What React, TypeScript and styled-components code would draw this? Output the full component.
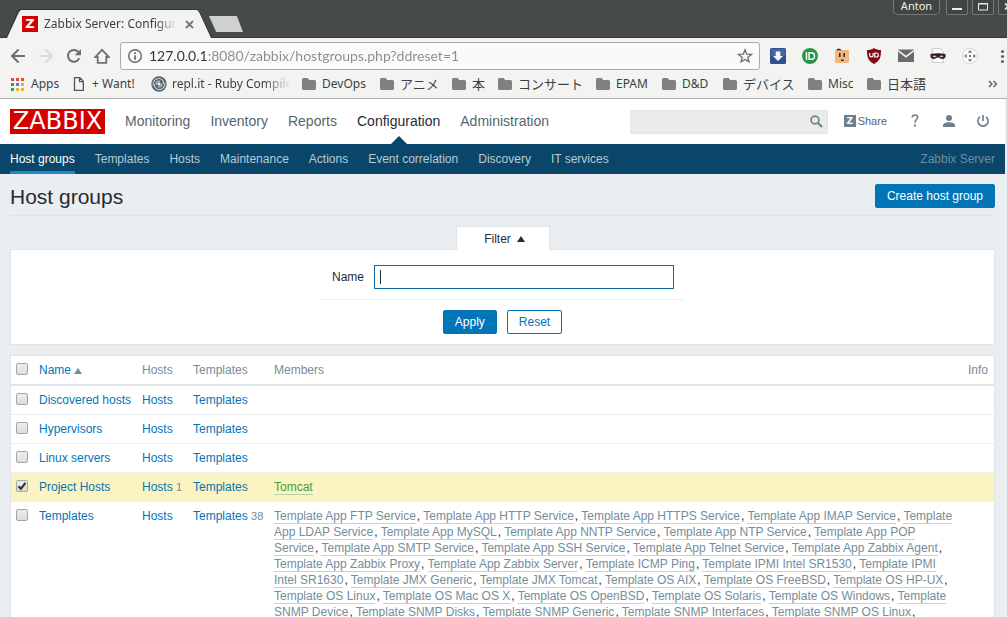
import React, { useState } from "react";
import styled, { createGlobalStyle, css } from "styled-components";

const UI = `"Noto Sans", "Noto Sans CJK JP", sans-serif`;
const BODY = `"Liberation Sans", Arial, sans-serif`;

const GlobalStyle = createGlobalStyle`
  *, *::before, *::after { box-sizing: border-box; }
  body { margin: 0; background: #ebeef0; color: #1f2c33; font: 12px/16px ${BODY}; }
  a { text-decoration: none; }
  button, input { font: inherit; }
  svg { display: block; flex: none; }
`;

const Window = styled.div`
  display: flex;
  flex-direction: column;
  height: 100vh;
  overflow: hidden;
`;

/* ---------- Browser chrome ---------- */

const TitleBar = styled.div`
  display: flex;
  flex: none;
  align-items: flex-end;
  height: 38px;
  padding-left: 6px;
  background: #464a49;
  box-shadow: inset 0 -1px #333736;
  font-family: ${UI};
  overflow: hidden;
`;

const TabEdge = styled.div`
  flex: none;
  width: 206px;
  height: 29px;
  padding: 1px 1px 0;
  background: #2f3332;
  clip-path: polygon(0 100%, 12px 2px, 14px 0, 191px 0, 193px 2px, 100% 100%);
`;

const Tab = styled.div`
  display: flex;
  align-items: center;
  height: 28px;
  padding: 0 17px 0 15px;
  background: #f3f4f2;
  clip-path: polygon(0 100%, 12px 2px, 14px 0, 190px 0, 192px 2px, 100% 100%);
`;

const TabTitle = styled.span`
  flex: 1;
  margin: 0 8px 0 6px;
  overflow: hidden;
  white-space: nowrap;
  font-size: 12px;
  line-height: 20px;
  color: #3c4043;
  mask-image: linear-gradient(to right, #000 84%, transparent);
`;

const IconButton = styled.button`
  display: flex;
  flex: none;
  align-items: center;
  justify-content: center;
  padding: 0;
  border: 0;
  background: none;
`;

const NavButton = styled(IconButton)`
  width: 28px;
  height: 28px;
`;

const NewTab = styled.button`
  width: 34px;
  height: 16px;
  margin: 0 0 6px -3px;
  padding: 0;
  border: 0;
  background: #cfd1cf;
  clip-path: polygon(0 0, 82% 0, 100% 100%, 21% 100%);
`;

const WindowControls = styled.div`
  display: flex;
  align-self: flex-start;
  gap: 4px;
  margin-left: auto;
`;

const WindowButton = styled.button<{ $width: number; $clipped?: boolean }>`
  display: flex;
  align-items: center;
  justify-content: center;
  width: ${(p) => p.$width}px;
  height: 15px;
  padding: 0;
  border: 1px solid #757877;
  border-top: 0;
  border-right-width: ${(p) => (p.$clipped ? 0 : 1)}px;
  border-radius: 0 0 2px 2px;
  background: #414544;
  color: #eceeed;
`;

const ProfileButton = styled(WindowButton)`
  margin-right: 2px;
  padding-bottom: 2px;
  border-radius: 0 0 5px 5px;
  font-size: 11px;
  line-height: 12px;
`;

const Chrome = styled.div`
  flex: none;
  border-bottom: 1px solid #b0b1b0;
  background: #f3f4f2;
  color: #3c3f3e;
  font-family: ${UI};
`;

const Toolbar = styled.div`
  display: flex;
  align-items: center;
  height: 36px;
  padding-left: 4px;
`;

const AddressBar = styled.label`
  display: flex;
  flex: 1;
  align-items: center;
  gap: 6px;
  height: 28px;
  margin: 0 10px 0 4px;
  padding: 0 6px;
  border: 1px solid #a9aaa9;
  border-radius: 3px;
  background: #fafafa;
`;

const AddressInput = styled.input`
  flex: 1;
  min-width: 0;
  padding: 0;
  border: 0;
  outline: 0;
  background: linear-gradient(to right, #333 59px, #8c8c8c 59px);
  background-clip: text;
  -webkit-text-fill-color: transparent;
  color: #8c8c8c;
  font-family: Lato, ${UI};
  font-size: 14px;
  line-height: 20px;
`;

const Extensions = styled.div`
  display: flex;
  gap: 16px;
`;

const Bookmarks = styled.nav`
  display: flex;
  align-items: center;
  height: 20px;
  margin-bottom: 4px;
  padding: 0 9px 0 11px;
`;

const Bookmark = styled.a<{ $width: number; $cjk?: boolean; $fade?: boolean }>`
  display: flex;
  flex: none;
  align-items: center;
  gap: ${(p) => (p.$fade ? 5 : 6)}px;
  width: ${(p) => p.$width}px;
  overflow: hidden;
  white-space: nowrap;
  color: inherit;
  font-size: ${(p) => (p.$cjk ? 13 : 12)}px;
  line-height: 20px;
  ${(p) =>
    p.$fade &&
    css`
      mask-image: linear-gradient(to right, #000 74%, transparent 93%);
    `}
`;

const More = styled(IconButton)`
  margin-left: auto;
`;

const ZBadge = styled.span<{ $size: number; $color: string }>`
  flex: none;
  width: ${(p) => p.$size}px;
  height: ${(p) => p.$size}px;
  background: ${(p) => p.$color};
  color: #fff;
  font-family: "DejaVu Sans", sans-serif;
  font-size: ${(p) => p.$size - 3}px;
  font-weight: 700;
  line-height: ${(p) => p.$size}px;
  text-align: center;
`;

/* ---------- Zabbix page ---------- */

const Page = styled.div`
  flex: 1;
  min-height: 0;
  margin-right: 2px;
  overflow: hidden;
`;

const Header = styled.header`
  display: flex;
  align-items: center;
  height: 45px;
  padding: 0 10px;
  background: #fff;
`;

const Logo = styled.a`
  width: 95px;
  height: 25px;
  margin-right: 20px;
  background: #d40000;
  color: #fff;
  font: 24px/25px "DejaVu Sans", sans-serif;
  text-align: center;
`;

const MainNav = styled.nav`
  display: flex;
  gap: 20px;
  font-size: 14px;
`;

const MainLink = styled.a<{ $active?: boolean }>`
  position: relative;
  line-height: 45px;
  color: ${(p) => (p.$active ? "#1f2c33" : "#54666f")};
  ${(p) =>
    p.$active &&
    css`
      &::after {
        content: "";
        position: absolute;
        bottom: 0;
        left: 50%;
        margin-left: -8px;
        border: 8px solid transparent;
        border-top: 0;
        border-bottom-color: #0a466a;
      }
    `}
`;

const Search = styled.form`
  display: flex;
  align-items: center;
  width: 198px;
  height: 24px;
  margin: 0 16px 0 auto;
  padding-right: 4px;
  border: 1px solid #e3e5e6;
  background: #ebebeb;
`;

const SearchInput = styled.input`
  flex: 1;
  min-width: 0;
  border: 0;
  outline: 0;
  background: none;
`;

const UserNav = styled.nav`
  display: flex;
  align-items: center;
  padding-bottom: 2px;
  font-size: 11px;
`;

const UserLink = styled.a<{ $gap: number }>`
  display: flex;
  align-items: center;
  gap: 2px;
  margin-right: ${(p) => p.$gap}px;
  color: #54666f;
`;

const SubNav = styled.nav`
  display: flex;
  gap: 20px;
  height: 30px;
  padding: 0 10px;
  background: #0a466a;
`;

const SubLink = styled.a<{ $active?: boolean }>`
  line-height: 30px;
  color: ${(p) => (p.$active ? "#fff" : "#b9cad5")};
  box-shadow: ${(p) => (p.$active ? "inset 0 -3px #1f87cc" : "none")};
`;

const ServerName = styled.span`
  margin-left: auto;
  line-height: 30px;
  color: #6f8b9b;
`;

const Main = styled.main`
  padding: 10px;
`;

const TitleRow = styled.div`
  display: flex;
  align-items: flex-start;
  justify-content: space-between;
  height: 32px;
  margin-bottom: 10px;
  border-bottom: 1px solid #dfe4e7;
`;

const Title = styled.h1`
  margin: 0;
  font-size: 21px;
  font-weight: 400;
  line-height: 26px;
`;

const Button = styled.button<{ $outline?: boolean }>`
  height: 24px;
  padding: 0 11px;
  border: 1px solid #0275b8;
  border-radius: 2px;
  background: ${(p) => (p.$outline ? "#fff" : "#0275b8")};
  color: ${(p) => (p.$outline ? "#0275b8" : "#fff")};
`;

const FilterTab = styled.button`
  position: relative;
  display: flex;
  align-items: center;
  justify-content: center;
  gap: 6px;
  width: 94px;
  height: 24px;
  margin: 0 auto -1px;
  padding: 0 0 0 4px;
  border: 1px solid #dfe4e7;
  border-bottom: 0;
  background: #fff;
  color: #1f2c33;
`;

const Arrow = styled.i<{ $color: string }>`
  display: inline-block;
  border: 4px solid transparent;
  border-top: 0;
  border-bottom: 6px solid ${(p) => p.$color};
`;

const FilterPanel = styled.form`
  display: flex;
  flex-direction: column;
  align-items: center;
  margin-bottom: 10px;
  padding: 15px 0 10px;
  border: 1px solid #dfe4e7;
  background: #fff;
`;

const Field = styled.label`
  display: flex;
  align-items: center;
  gap: 10px;
  padding: 0 10px 10px 11px;
  border-bottom: 1px solid #ebeef0;
`;

const NameInput = styled.input`
  width: 300px;
  height: 24px;
  padding: 0 5px;
  border: 1px solid #0c6aa3;
  outline: 0;
  background: linear-gradient(#1f2c33, #1f2c33) 5px center / 1px 14px no-repeat #fff;
  caret-color: transparent;
`;

const Actions = styled.div`
  display: flex;
  gap: 10px;
  padding-top: 10px;
`;

const Table = styled.table`
  width: 100%;
  border: 1px solid #dfe4e7;
  border-collapse: separate;
  border-spacing: 0;
  table-layout: fixed;
  background: #fff;

  th, td {
    padding: 6px 5px;
    text-align: left;
    vertical-align: top;
    font-weight: 400;
    white-space: nowrap;
  }
  th {
    border-bottom: 2px solid #dfe4e7;
    color: #768d99;
  }
  td {
    border-bottom: 1px solid #ebeef0;
  }
  td.members {
    padding-right: 10px;
    white-space: normal;
  }
`;

const Row = styled.tr<{ $selected: boolean }>`
  background: ${(p) => (p.$selected ? "#fbf4c0" : "#fff")};
`;

const Check = styled.input`
  display: block;
  appearance: none;
  width: 12px;
  height: 12px;
  margin: 1px 0 0;
  border: 1px solid #a6a6a6;
  border-radius: 2px;
  background: linear-gradient(#ededed, #dcdcdc);

  &:checked {
    background: url("data:image/svg+xml,%3Csvg xmlns='http://www.w3.org/2000/svg' viewBox='0 0 10 10'%3E%3Cpath d='M1.5 5.3l2.4 2.5L8.5 1.8' fill='none' stroke='%23333' stroke-width='2.2'/%3E%3C/svg%3E"),
      linear-gradient(#ededed, #dcdcdc);
  }
`;

const Link = styled.a`
  color: #0275b8;
`;

const Count = styled.span`
  font-size: 11px;
  color: #768d99;
`;

const Member = styled.a<{ $host?: boolean }>`
  margin-right: 1px;
  color: ${(p) => (p.$host ? "#429e47" : "#768d99")};
  border-bottom: 1px solid ${(p) => (p.$host ? "#b9cfa4" : "#c8d1d6")};
`;

/* ---------- Icons ---------- */

const FolderIcon = () => (
  <svg width="14" height="12" viewBox="0 0 14 12">
    <path d="M1.5 0h4.2l1.5 2h5.3A1.5 1.5 0 0 1 14 3.500v7a1.500 1.500 0 0 1-1.500 1.500h-11A1.500 1.500 0 0 1 0 10.500v-9A1.500 1.500 0 0 1 1.500 0z" fill="#808080" />
  </svg>
);

const AppsIcon = () => (
  <svg width="14" height="13" viewBox="0 0 14 13">
    {["#e8453c", "#e8453c", "#e8453c", "#2e9e5b", "#3b8beb", "#f2b01e", "#2e9e5b", "#f2b01e", "#f2b01e"].map((c, i) => (
      <rect key={i} x={(i % 3) * 5} y={Math.floor(i / 3) * 5} width="3" height="3" fill={c} />
    ))}
  </svg>
);

const PageIcon = () => (
  <svg width="13" height="14" viewBox="0 0 13 14" fill="none" stroke="#555" strokeWidth="1.300">
    <path d="M1.500.7h5.300l3.500 3.500v9.100H1.500zM6.500.7v4h4" />
  </svg>
);

const ReplIcon = () => (
  <svg width="16" height="16" viewBox="0 0 16 16">
    <circle cx="8" cy="8" r="7.700" fill="#56646e" />
    <g fill="none" stroke="#c7d2d8" strokeWidth="1.100">
      <path d="M2 9.500C1.500 5 5 2 8.500 2.500c3 .4 4.500 3 4 5.500" />
      <path d="M14 6.500c.5 4.500-3 7.500-6.500 7-3-.4-4.500-3-4-5.500" />
      <path d="M5 8.500C4.800 6 7 4.500 9 5.200M11 7.500c.2 2.500-2 4-4 3.300" />
    </g>
    <circle cx="8" cy="8" r="1.700" fill="#e5ebee" />
  </svg>
);

const stroke = { fill: "none", stroke: "#6e706f", strokeWidth: 2 };

const BackIcon = () => (
  <svg width="16" height="16" viewBox="0 0 16 16" {...stroke}>
    <path d="M15 8H2.500M8.500 1.500L2 8l6.500 6.500" />
  </svg>
);

const ForwardIcon = () => (
  <svg width="16" height="16" viewBox="0 0 16 16" {...stroke} stroke="#dadbda">
    <path d="M1 8h12.500M7.500 1.500L14 8l-6.500 6.500" />
  </svg>
);

const ReloadIcon = () => (
  <svg width="16" height="16" viewBox="0 0 16 16" {...stroke}>
    <path d="M13.300 10.200A5.900 5.900 0 1 1 12.400 4" />
    <path d="M15 1v6.300H8.700z" fill="#6e706f" stroke="none" />
  </svg>
);

const HomeIcon = () => (
  <svg width="16" height="16" viewBox="0 0 16 16" {...stroke} strokeWidth="1.800">
    <path d="M1.300 9L8 1.800 14.700 9h-2.400v5.800H3.700V9z" />
  </svg>
);

const InfoIcon = () => (
  <svg width="16" height="16" viewBox="0 0 16 16">
    <circle cx="8" cy="8" r="6.300" fill="none" stroke="#666" strokeWidth="1.400" />
    <path d="M7.200 4.300h1.700V6H7.200zM7.200 7.200h1.700v4.500H7.200z" fill="#666" />
  </svg>
);

const StarIcon = () => (
  <svg width="16" height="16" viewBox="0 0 16 16" fill="none" stroke="#6c6c6c" strokeWidth="1.300">
    <path d="M8 1.800l1.700 4.300 4.700.3-3.600 3 1.200 4.500L8 11.400l-4 2.500 1.200-4.500-3.600-3 4.700-.3z" />
  </svg>
);

const DownloadExt = () => (
  <svg width="16" height="16" viewBox="0 0 16 16">
    <rect width="16" height="16" rx="1.500" fill="#2f4f8f" />
    <rect x="1" y="1" width="14" height="7" fill="#4468a6" />
    <path d="M5.700 3.500h4.600V8H13l-5 5-5-5h2.700z" fill="#f4f7fb" />
  </svg>
);

const PushExt = () => (
  <svg width="16" height="16" viewBox="0 0 16 16">
    <circle cx="8" cy="8" r="8" fill="#2a9547" />
    <path d="M4.500 4v8M7 4.700h2.200a3.300 3.300 0 0 1 0 6.600H7z" fill="none" stroke="#fff" strokeWidth="1.400" />
  </svg>
);

const FaceExt = () => (
  <svg width="16" height="16" viewBox="0 0 16 16">
    <rect x="1" y="2" width="14" height="13" rx="1" fill="#f2b67f" />
    <path d="M2.500 2.200C3 .5 6 .3 7.500 2.200z" fill="#16225a" />
    <path d="M5 5h1.500v4H5zM9.500 5H11v4H9.500zM7 11.500h2.500V13H7z" fill="#33251c" />
  </svg>
);

const ShieldExt = () => (
  <svg width="16" height="16" viewBox="0 0 16 16">
    <path d="M8 0c2 1.500 4.300 2 7 2 0 6.500-.5 10.500-7 14C1.500 12.500 1 8.500 1 2c2.700 0 5-.5 7-2z" fill="#850c12" />
    <path d="M3.700 5v2.200a1.700 1.700 0 0 0 3.400 0V5M8.700 5v4h1.600a2 2 0 0 0 0-4z" fill="none" stroke="#fff" strokeWidth="1.200" />
  </svg>
);

const MailExt = () => (
  <svg width="16" height="16" viewBox="0 0 16 16">
    <rect y="1.500" width="16" height="12.500" fill="#6b6b6b" />
    <path d="M0 2.500l8 6.200 8-6.200" fill="none" stroke="#f3f4f2" strokeWidth="1.500" />
  </svg>
);

const MaskExt = () => (
  <svg width="16" height="16" viewBox="0 0 16 16">
    <path d="M2.500.5h8l3 3v11h-11z" fill="#fafbfb" stroke="#c9cdd0" />
    <path d="M.5 6c5-1 10-1 15 0v3c-1 2.500-5 2.500-6.500.5H7C5.500 11.500 1.500 11.500.5 9z" fill="#3a1c1f" />
    <path d="M2.500 8.300c1-1.200 3-1.200 4 0-1 1.200-3 1.200-4 0zM9.500 8.300c1-1.200 3-1.200 4 0-1 1.200-3 1.200-4 0z" fill="#d9c4c4" />
  </svg>
);

const MoveExt = () => (
  <svg width="16" height="16" viewBox="0 0 16 16">
    <circle cx="8" cy="8" r="7.500" fill="#fdfdfd" stroke="#d5d5d5" />
    <path d="M8 2l2.200 2.700H5.800zM8 14l2.200-2.700H5.800zM2 8l2.700-2.200v4.400zM14 8l-2.700-2.200v4.400zM7 7h2v2H7z" fill="#777" />
  </svg>
);

const MenuIcon = () => (
  <svg width="13" height="16" viewBox="0 0 13 16" fill="#666">
    <circle cx="8.500" cy="3.500" r="1.600" />
    <circle cx="8.500" cy="8.500" r="1.600" />
    <circle cx="8.500" cy="13.500" r="1.600" />
  </svg>
);

const SearchIcon = () => (
  <svg width="13" height="13" viewBox="0 0 13 13" fill="none" stroke="#6c818c" strokeWidth="1.700">
    <circle cx="5" cy="5" r="3.900" />
    <path d="M7.800 7.800l4.200 4.200" strokeWidth="2.100" />
  </svg>
);

const HelpIcon = () => (
  <svg width="8" height="13" viewBox="0 0 8 13">
    <path d="M1.200 3.600C1.200 2 2.400 1 4 1s2.700.9 2.700 2.300C6.700 5.500 4 5.600 4 8.700" fill="none" stroke="#6c818c" strokeWidth="1.600" />
    <rect x="3" y="10.500" width="2" height="2" fill="#6c818c" />
  </svg>
);

const UserIcon = () => (
  <svg width="12" height="12" viewBox="0 0 12 12" fill="#6c818c">
    <circle cx="6" cy="3" r="3" />
    <path d="M0 12V10.300C0 8.500 3 7.300 6 7.300s6 1.200 6 3V12z" />
  </svg>
);

const PowerIcon = () => (
  <svg width="12" height="12" viewBox="0 0 12 12" fill="none" stroke="#6c818c" strokeWidth="1.700">
    <path d="M6 0v6M3 1.900a5.100 5.100 0 1 0 6 0" />
  </svg>
);

/* ---------- Data ---------- */

const folders = [
  { label: "DevOps", width: 78 },
  { label: "アニメ", width: 72, cjk: true },
  { label: "本", width: 46, cjk: true },
  { label: "コンサート", width: 98, cjk: true },
  { label: "EPAM", width: 66 },
  { label: "D&D", width: 61 },
  { label: "デバイス", width: 85, cjk: true },
  { label: "Misc", width: 59 },
  { label: "日本語", width: 72, cjk: true },
];

const mainLinks = ["Monitoring", "Inventory", "Reports", "Configuration", "Administration"];
const subLinks = ["Host groups", "Templates", "Hosts", "Maintenance", "Actions", "Event correlation", "Discovery", "IT services"];

const templates = [
  "App FTP Service", "App HTTP Service", "App HTTPS Service", "App IMAP Service", "App LDAP Service",
  "App MySQL", "App NNTP Service", "App NTP Service", "App POP Service", "App SMTP Service",
  "App SSH Service", "App Telnet Service", "App Zabbix Agent", "App Zabbix Proxy", "App Zabbix Server",
  "ICMP Ping", "IPMI Intel SR1530", "IPMI Intel SR1630", "JMX Generic", "JMX Tomcat", "OS AIX",
  "OS FreeBSD", "OS HP-UX", "OS Linux", "OS Mac OS X", "OS OpenBSD", "OS Solaris", "OS Windows",
  "SNMP Device", "SNMP Disks", "SNMP Generic", "SNMP Interfaces", "SNMP OS Linux",
].map((name) => `Template ${name}`);

interface Group {
  name: string;
  hosts?: number;
  templates?: number;
  members: string[];
}

const groups: Group[] = [
  { name: "Discovered hosts", members: [] },
  { name: "Hypervisors", members: [] },
  { name: "Linux servers", members: [] },
  { name: "Project Hosts", hosts: 1, members: ["Tomcat"] },
  { name: "Templates", templates: 38, members: templates },
];

/* ---------- Sections ---------- */

const Browser = () => (
  <>
    <TitleBar>
      <TabEdge>
        <Tab>
          <ZBadge $size={16} $color="#d40000">Z</ZBadge>
          <TabTitle>Zabbix Server: Configuration</TabTitle>
          <IconButton aria-label="Close tab">
            <svg width="9" height="9" viewBox="0 0 9 9" stroke="#777" strokeWidth="1.800">
              <path d="M1 1l7 7M8 1L1 8" />
            </svg>
          </IconButton>
        </Tab>
      </TabEdge>
      <NewTab aria-label="New tab" />
      <WindowControls>
        <ProfileButton $width={47}>Anton</ProfileButton>
        <WindowButton $width={22} aria-label="Minimize">
          <svg width="10" height="12" viewBox="0 0 10 12"><path d="M0 8h10" stroke="#eceeed" strokeWidth="2" /></svg>
        </WindowButton>
        <WindowButton $width={22} aria-label="Maximize">
          <svg width="10" height="12" viewBox="0 0 10 12" fill="none" stroke="#eceeed">
            <path d="M.5 2.500h9v6.500h-9zM0 3h10" />
          </svg>
        </WindowButton>
        <WindowButton $width={9} $clipped aria-label="Close">
          <svg width="8" height="12" viewBox="0 0 8 12" stroke="#eceeed" strokeWidth="1.600">
            <path d="M6 2.500l6 6M6 8.500l6-6" />
          </svg>
        </WindowButton>
      </WindowControls>
    </TitleBar>
    <Chrome>
      <Toolbar>
        <NavButton aria-label="Back"><BackIcon /></NavButton>
        <NavButton aria-label="Forward"><ForwardIcon /></NavButton>
        <NavButton aria-label="Reload"><ReloadIcon /></NavButton>
        <NavButton aria-label="Home"><HomeIcon /></NavButton>
        <AddressBar>
          <InfoIcon />
          <AddressInput aria-label="Address" defaultValue="127.0.0.1:8080/zabbix/hostgroups.php?ddreset=1" />
          <StarIcon />
        </AddressBar>
        <Extensions>
          <IconButton aria-label="Downloads"><DownloadExt /></IconButton>
          <IconButton aria-label="Push"><PushExt /></IconButton>
          <IconButton aria-label="Amazing box"><FaceExt /></IconButton>
          <IconButton aria-label="Blocker"><ShieldExt /></IconButton>
          <IconButton aria-label="Mail"><MailExt /></IconButton>
          <IconButton aria-label="Mask"><MaskExt /></IconButton>
          <IconButton aria-label="Move"><MoveExt /></IconButton>
          <IconButton aria-label="Menu"><MenuIcon /></IconButton>
        </Extensions>
      </Toolbar>
      <Bookmarks>
        <Bookmark href="#" $width={62}><AppsIcon />Apps</Bookmark>
        <Bookmark href="#" $width={78}><PageIcon />+ Want!</Bookmark>
        <Bookmark href="#" $width={151} $fade><ReplIcon />repl.it - Ruby Compiler</Bookmark>
        {folders.map((f) => (
          <Bookmark href="#" key={f.label} $width={f.width} $cjk={f.cjk}>
            <FolderIcon />
            {f.label}
          </Bookmark>
        ))}
        <More aria-label="More bookmarks">
          <svg width="10" height="8" viewBox="0 0 10 8" fill="none" stroke="#666" strokeWidth="1.500">
            <path d="M1 1l3 3-3 3M5.500 1l3 3-3 3" />
          </svg>
        </More>
      </Bookmarks>
    </Chrome>
  </>
);

const SiteHeader = () => (
  <>
    <Header>
      <Logo href="#">ZABBIX</Logo>
      <MainNav>
        {mainLinks.map((l) => (
          <MainLink href="#" key={l} $active={l === "Configuration"}>{l}</MainLink>
        ))}
      </MainNav>
      <Search>
        <SearchInput aria-label="Search" />
        <IconButton type="button" aria-label="Search"><SearchIcon /></IconButton>
      </Search>
      <UserNav>
        <UserLink href="#" $gap={24}><ZBadge $size={12} $color="#6c818c">Z</ZBadge>Share</UserLink>
        <UserLink href="#" $gap={24} aria-label="Help"><HelpIcon /></UserLink>
        <UserLink href="#" $gap={22} aria-label="Profile"><UserIcon /></UserLink>
        <UserLink href="#" $gap={6} aria-label="Sign out"><PowerIcon /></UserLink>
      </UserNav>
    </Header>
    <SubNav>
      {subLinks.map((l) => (
        <SubLink href="#" key={l} $active={l === "Host groups"}>{l}</SubLink>
      ))}
      <ServerName>Zabbix Server</ServerName>
    </SubNav>
  </>
);

const GroupTable = () => {
  const [selected, setSelected] = useState<string[]>(["Project Hosts"]);
  const toggle = (name: string) =>
    setSelected((s) => (s.includes(name) ? s.filter((n) => n !== name) : [...s, name]));

  return (
    <Table>
      <colgroup>
        <col width="23" />
        <col width="103" />
        <col width="51" />
        <col width="81" />
        <col />
        <col width="31" />
      </colgroup>
      <thead>
        <tr>
          <th><Check type="checkbox" aria-label="Select all" /></th>
          <th><Link href="#">Name <Arrow $color="#768d99" /></Link></th>
          <th>Hosts</th>
          <th>Templates</th>
          <th>Members</th>
          <th>Info</th>
        </tr>
      </thead>
      <tbody>
        {groups.map((g) => (
          <Row key={g.name} $selected={selected.includes(g.name)}>
            <td>
              <Check
                type="checkbox"
                aria-label={g.name}
                checked={selected.includes(g.name)}
                onChange={() => toggle(g.name)}
              />
            </td>
            <td><Link href="#">{g.name}</Link></td>
            <td><Link href="#">Hosts</Link> {g.hosts && <Count>{g.hosts}</Count>}</td>
            <td><Link href="#">Templates</Link> {g.templates && <Count>{g.templates}</Count>}</td>
            <td className="members">
              {g.members.map((m) => (
                <React.Fragment key={m}>
                  <Member href="#" $host={m === "Tomcat"}>{m}</Member>
                  {g.members.length > 1 && ", "}
                </React.Fragment>
              ))}
            </td>
            <td />
          </Row>
        ))}
      </tbody>
    </Table>
  );
};

export default function App() {
  return (
    <Window>
      <GlobalStyle />
      <Browser />
      <Page>
        <SiteHeader />
        <Main>
          <TitleRow>
            <Title>Host groups</Title>
            <Button>Create host group</Button>
          </TitleRow>
          <FilterTab>Filter <Arrow $color="#1f2c33" /></FilterTab>
          <FilterPanel>
            <Field>Name <NameInput type="text" /></Field>
            <Actions>
              <Button type="button">Apply</Button>
              <Button type="button" $outline>Reset</Button>
            </Actions>
          </FilterPanel>
          <GroupTable />
        </Main>
      </Page>
    </Window>
  );
}
